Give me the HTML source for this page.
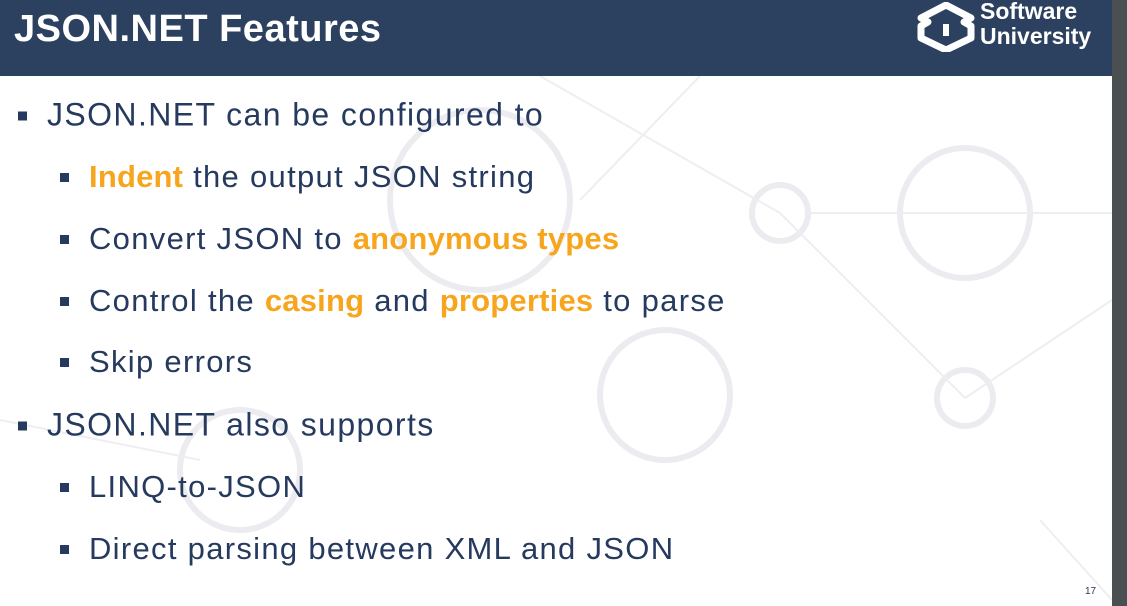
<!DOCTYPE html><html><head><style>
body{margin:0;width:1127px;height:606px;overflow:hidden;background:#4a4f52;font-family:"Liberation Sans",sans-serif}
#s{position:absolute;left:0;top:0;width:1112px;height:606px;background:#fff;overflow:hidden}
#h{position:absolute;left:0;top:0;width:1112px;height:76px;background:#2c405f}
#t{position:absolute;left:14px;top:8px;color:#fff;font-weight:bold;font-size:38px;letter-spacing:0.5px}
.r{position:absolute;color:#253a5e;font-size:32px;letter-spacing:1.4px;white-space:nowrap;transform:translateY(-50%)}
.r:before{content:"";position:absolute;width:9px;height:9px;background:#253a5e;top:50%;margin-top:-4px}
.a{left:47px}.a:before{left:-29px}
.b{left:89px;font-size:31px;letter-spacing:1.3px}.b:before{left:-29px}
.o{color:#f7a51c;font-weight:bold;letter-spacing:0.2px}
</style></head><body><div id="s">
<svg style="position:absolute;left:0;top:0" width="1112" height="606"><g stroke="#ececf0" stroke-width="6" fill="none"><circle cx="480" cy="200" r="90"/><circle cx="665" cy="395" r="65"/><circle cx="965" cy="213" r="65"/><circle cx="780" cy="213" r="28"/><circle cx="965" cy="398" r="28"/><circle cx="240" cy="470" r="60"/></g><g stroke="#eeeef2" stroke-width="2"><line x1="540" y1="76" x2="780" y2="213"/><line x1="780" y1="213" x2="965" y2="398"/><line x1="808" y1="213" x2="1112" y2="213"/><line x1="965" y1="398" x2="1112" y2="300"/><line x1="700" y1="76" x2="580" y2="200"/><line x1="1040" y1="520" x2="1112" y2="600"/><line x1="0" y1="420" x2="200" y2="460"/></g></svg>
<div id="h"><div id="t">JSON.NET Features</div>
<svg style="position:absolute;left:915px;top:2px" width="62" height="50" viewBox="0 0 62 50"><path d="M31 3 L56 16 L49 20 L56 24 L56 36 L31 48 L6 36 L6 24 L13 20 L6 16 Z" fill="none" stroke="#fff" stroke-width="7" stroke-linejoin="round"/><path d="M31 22 L31 34" stroke="#fff" stroke-width="6"/></svg>
<div style="position:absolute;left:980px;top:-1px;color:#fff;font-weight:bold;font-size:23px;line-height:25px">Software<br>University</div></div>
<div class="r a" style="top:115px">JSON.NET can be configured to</div>
<div class="r b" style="top:177px"><span class="o">Indent</span> the output JSON string</div>
<div class="r b" style="top:239px">Convert JSON to <span class="o">anonymous types</span></div>
<div class="r b" style="top:301px">Control the <span class="o">casing</span> and <span class="o">properties</span> to parse</div>
<div class="r b" style="top:362px">Skip errors</div>
<div class="r a" style="top:425px">JSON.NET also supports</div>
<div class="r b" style="top:487px">LINQ-to-JSON</div>
<div class="r b" style="top:549px">Direct parsing between XML and JSON</div>
<div style="position:absolute;left:1085px;top:586px;font-size:10px;color:#253a5e">17</div>
</div></body></html>
